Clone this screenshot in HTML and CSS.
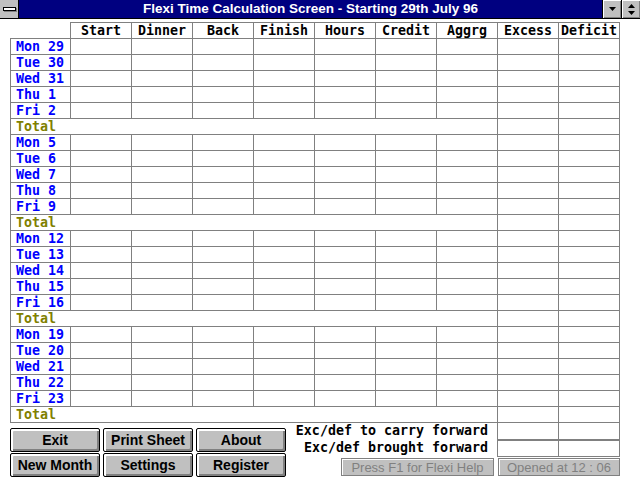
FILE: index.html
```html
<!DOCTYPE html>
<html lang="en">
<head>
  <meta charset="UTF-8" />
  <title>Flexi Time Calculation Screen</title>
  <link rel="stylesheet" href="styles.css">
</head>
<body>
  <div class="titlebar">
    <div class="sysmenu"><span class="sysbar"></span></div>
    <div class="title">Flexi Time Calculation Screen - Starting 29th July 96</div>
    <div class="tbtn">
      <svg width="9" height="5" viewBox="0 0 9 5"><path d="M1 0h7L4.5 4z" fill="#000"/></svg>
    </div>
    <div class="tbtn">
      <svg width="9" height="11" viewBox="0 0 9 11"><path d="M4.5 0L8 4H1z M1 7h7L4.5 11z" fill="#000"/></svg>
    </div>
  </div>

  <table class="grid">
    <colgroup>
      <col><col><col><col><col><col><col><col><col><col>
    </colgroup>
    <thead>
      <tr>
        <th class="corner"></th>
        <th>Start</th><th>Dinner</th><th>Back</th><th>Finish</th><th>Hours</th>
        <th>Credit</th><th>Aggrg</th><th>Excess</th><th>Deficit</th>
      </tr>
    </thead>
    <tbody>
      <tr><th class="day">Mon 29</th><td></td><td></td><td></td><td></td><td></td><td></td><td></td><td></td><td></td></tr>
      <tr><th class="day">Tue 30</th><td></td><td></td><td></td><td></td><td></td><td></td><td></td><td></td><td></td></tr>
      <tr><th class="day">Wed 31</th><td></td><td></td><td></td><td></td><td></td><td></td><td></td><td></td><td></td></tr>
      <tr><th class="day">Thu 1</th><td></td><td></td><td></td><td></td><td></td><td></td><td></td><td></td><td></td></tr>
      <tr><th class="day">Fri 2</th><td></td><td></td><td></td><td></td><td></td><td></td><td></td><td></td><td></td></tr>
      <tr><th class="total" colspan="8">Total</th><td></td><td></td></tr>

      <tr><th class="day">Mon 5</th><td></td><td></td><td></td><td></td><td></td><td></td><td></td><td></td><td></td></tr>
      <tr><th class="day">Tue 6</th><td></td><td></td><td></td><td></td><td></td><td></td><td></td><td></td><td></td></tr>
      <tr><th class="day">Wed 7</th><td></td><td></td><td></td><td></td><td></td><td></td><td></td><td></td><td></td></tr>
      <tr><th class="day">Thu 8</th><td></td><td></td><td></td><td></td><td></td><td></td><td></td><td></td><td></td></tr>
      <tr><th class="day">Fri 9</th><td></td><td></td><td></td><td></td><td></td><td></td><td></td><td></td><td></td></tr>
      <tr><th class="total" colspan="8">Total</th><td></td><td></td></tr>

      <tr><th class="day">Mon 12</th><td></td><td></td><td></td><td></td><td></td><td></td><td></td><td></td><td></td></tr>
      <tr><th class="day">Tue 13</th><td></td><td></td><td></td><td></td><td></td><td></td><td></td><td></td><td></td></tr>
      <tr><th class="day">Wed 14</th><td></td><td></td><td></td><td></td><td></td><td></td><td></td><td></td><td></td></tr>
      <tr><th class="day">Thu 15</th><td></td><td></td><td></td><td></td><td></td><td></td><td></td><td></td><td></td></tr>
      <tr><th class="day">Fri 16</th><td></td><td></td><td></td><td></td><td></td><td></td><td></td><td></td><td></td></tr>
      <tr><th class="total" colspan="8">Total</th><td></td><td></td></tr>

      <tr><th class="day">Mon 19</th><td></td><td></td><td></td><td></td><td></td><td></td><td></td><td></td><td></td></tr>
      <tr><th class="day">Tue 20</th><td></td><td></td><td></td><td></td><td></td><td></td><td></td><td></td><td></td></tr>
      <tr><th class="day">Wed 21</th><td></td><td></td><td></td><td></td><td></td><td></td><td></td><td></td><td></td></tr>
      <tr><th class="day">Thu 22</th><td></td><td></td><td></td><td></td><td></td><td></td><td></td><td></td><td></td></tr>
      <tr><th class="day">Fri 23</th><td></td><td></td><td></td><td></td><td></td><td></td><td></td><td></td><td></td></tr>
      <tr><th class="total" colspan="8">Total</th><td></td><td></td></tr>
    </tbody>
  </table>

  <div class="footer">
    <div class="actions">
      <button class="btn">Exit</button>
      <button class="btn">Print Sheet</button>
      <button class="btn">About</button>
      <button class="btn">New Month</button>
      <button class="btn">Settings</button>
      <button class="btn">Register</button>
    </div>
    <div class="summary">
      <div class="label">Exc/def to carry forward</div>
      <div class="cell first"></div>
      <div class="cell"></div>
      <div class="label">Exc/def brought forward</div>
      <div class="cell first second"></div>
      <div class="cell second"></div>
      <div class="status help">Press F1 for Flexi Help</div>
      <div class="status opened">Opened at 12 : 06</div>
    </div>
  </div>
</body>
</html>
```

FILE: styles.css
```css
body {
  margin: 0;
  width: 640px;
  height: 480px;
  overflow: hidden;
  background: #fff;
  font-family: "DejaVu Sans Mono", monospace;
}

/* window caption */
.titlebar {
  display: flex;
  height: 18px;
  border-bottom: 1px solid #000;
}
.sysmenu {
  width: 18px;
  background: #c0c0c0;
  border-right: 1px solid #000;
  display: flex;
  align-items: center;
  justify-content: center;
}
.sysbar {
  width: 11px;
  height: 2px;
  background: #fff;
  border: 1px solid #000;
  box-shadow: 1px 1px 0 #808080;
}
.title {
  flex: 1;
  background: #000080;
  color: #fff;
  font: bold 13.5px "Liberation Sans", Arial, sans-serif;
  line-height: 18px;
  text-align: center;
}
.tbtn {
  width: 18px;
  background: #c0c0c0;
  border-left: 1px solid #000;
  box-shadow: inset 1px 1px 0 #fff, inset -1px -1px 0 #808080;
  display: flex;
  align-items: center;
  justify-content: center;
}

/* time sheet */
.grid {
  border-collapse: separate;
  border-spacing: 0;
  table-layout: fixed;
  width: 610px;
  margin: 3px 0 0 10px;
  font-size: 13.3px;
  font-weight: bold;
}
.grid col { width: 61px; }
.grid th, .grid td {
  padding: 0;
  line-height: 15px;
  border-right: 1px solid #808080;
  border-bottom: 1px solid #808080;
  white-space: pre;
  overflow: hidden;
}
.grid thead th {
  border-top: 1px solid #808080;
  color: #000;
  text-align: center;
}
.grid thead th.corner {
  border-top: none;
}
.grid th.day, .grid th.total {
  text-align: left;
  padding-left: 5px;
  border-left: 1px solid #808080;
}
.day { color: #0000ff; }
.total { color: #808000; }

/* buttons and carry forward */
.footer {
  display: flex;
  width: 610px;
  margin-left: 10px;
}
.actions {
  display: grid;
  grid-template-columns: repeat(3, 90px);
  grid-auto-rows: 24px;
  gap: 1px 3px;
  margin-top: 5px;
}
.btn {
  padding: 0;
  background: #c0c0c0;
  border: 1px solid #000;
  border-radius: 2px;
  box-shadow: inset 2px 2px 0 #fff, inset -2px -2px 0 #808080;
  font: bold 14px "Liberation Sans", Arial, sans-serif;
  color: #000;
}
.summary {
  flex: 1;
  display: grid;
  grid-template-columns: 1fr 62px 61px;
  grid-template-rows: 17px 17px 19px;
}
.label {
  font-size: 13.3px;
  font-weight: bold;
  line-height: 16px;
  text-align: right;
  padding-right: 9px;
  white-space: pre;
}
.cell {
  border-right: 1px solid #808080;
  border-bottom: 1px solid #808080;
}
.cell.first { border-left: 1px solid #808080; }
.cell.second { border-top: 1px solid #808080; }
.status {
  margin-top: 1px;
  background: #c0c0c0;
  border: 1px solid #808080;
  box-shadow: inset 1px 1px 0 #fff;
  color: #808080;
  font: 13px "Liberation Sans", Arial, sans-serif;
  line-height: 17px;
  text-align: center;
}
.help {
  justify-self: end;
  width: 151px;
  margin-right: 3px;
}
.opened {
  grid-column: 2 / 4;
  margin-left: 1px;
}
```
